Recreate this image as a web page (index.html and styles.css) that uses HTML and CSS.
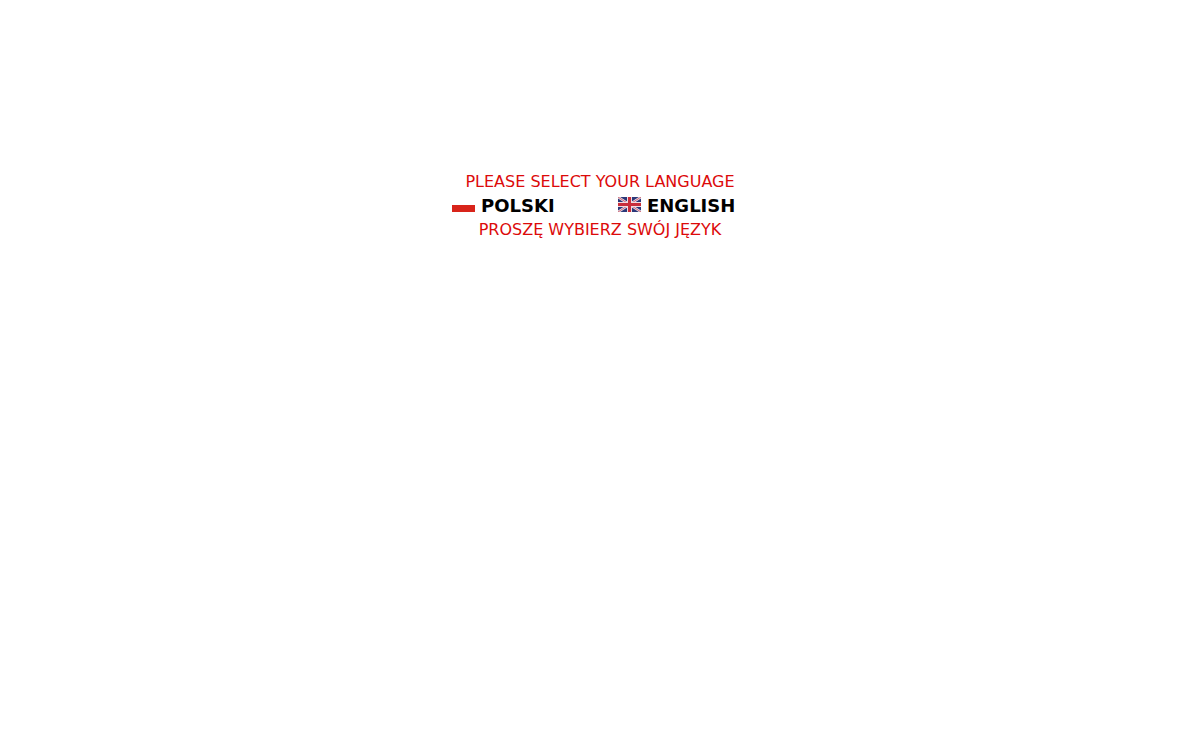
FILE: index.html
```html
<!DOCTYPE html>
<html lang="en">
<head>
<meta charset="utf-8">
<title>Select language</title>
<link rel="stylesheet" href="styles.css">
</head>
<body>
<main class="chooser">
  <p class="prompt">PLEASE SELECT YOUR LANGUAGE</p>
  <nav class="languages">
    <a class="language" href="#pl" lang="pl">
      <svg class="flag" viewBox="0 0 23 15" aria-hidden="true"><path fill="#fff" d="M0 0h23v15H0z"/><path fill="#d8241a" d="M0 8h23v7H0z"/></svg>
      <span>POLSKI</span>
    </a>
    <a class="language" href="#en">
      <svg class="flag" viewBox="0 0 23 15" aria-hidden="true"><path fill="#2c3878" d="M0 0h23v15H0z"/><path stroke="#e8dde6" stroke-width="2.400" d="M0 0l23 15M23 0L0 15"/><path stroke="#c84858" stroke-width=".8" d="M0 0l23 15M23 0L0 15"/><path stroke="#f0dde0" stroke-width="5" d="M11.500 0v15M0 7.500h23"/><path stroke="#c92e3a" stroke-width="3" d="M11.500 0v15M0 7.500h23"/></svg>
      <span>ENGLISH</span>
    </a>
  </nav>
  <p class="prompt" lang="pl">PROSZĘ WYBIERZ SWÓJ JĘZYK</p>
</main>
</body>
</html>
```
FILE: styles.css
```css
body {
  margin: 0;
  background: #fff;
  font-family: Verdana, "DejaVu Sans", sans-serif;
}

.chooser {
  display: flex;
  flex-direction: column;
  align-items: center;
  padding-top: 170px;
}

.prompt {
  margin: 0;
  color: #dc0a0a;
  font-size: 16px;
  line-height: 24px;
}

.languages {
  display: grid;
  grid-template-columns: 106px 120px;
  gap: 60px;
  padding-right: 10px;
}

.language {
  display: flex;
  align-items: center;
  gap: 6px;
  color: #000;
  font-size: 18px;
  font-weight: bold;
  line-height: 24px;
  text-decoration: none;
}

.flag {
  width: 23px;
  height: 15px;
  margin-bottom: 3px;
}
```
